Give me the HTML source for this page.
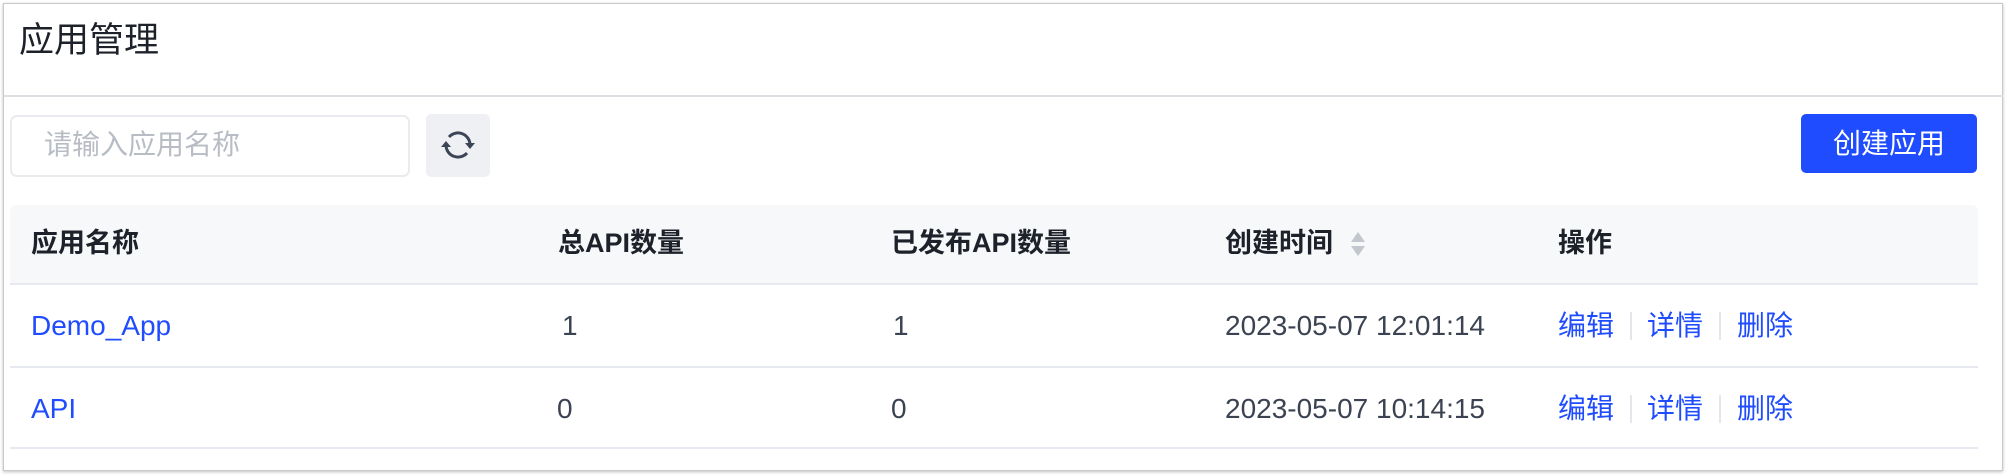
<!DOCTYPE html>
<html><head><meta charset="utf-8"><style>
*{margin:0;padding:0;box-sizing:border-box}
body{width:2008px;height:476px;background:#fff;font-family:"Liberation Sans","Noto Sans CJK SC",sans-serif;position:relative;overflow:hidden}
.frame{position:absolute;left:3px;top:3px;width:2000px;height:468px;border:1px solid #c9c9c9;box-shadow:0 1px 3px rgba(0,0,0,.25)}
.abs{position:absolute;white-space:nowrap}
.title{left:19px;top:18px;font-size:35px;color:#1d2129;line-height:46px}
.hr{left:4px;top:95px;width:1999px;height:2px;background:#dcdfe4}
.input{left:10px;top:115px;width:400px;height:62px;border:2px solid #e9ebef;border-radius:7px}
.ph{left:44px;top:128px;font-size:28px;color:#b8bcc4;line-height:34px}
.refresh{left:426px;top:114px;width:64px;height:63px;background:#eff0f4;border-radius:5px}
.btn{left:1801px;top:114px;width:176px;height:59px;background:#1f4cff;border-radius:5px;color:#fff;font-size:28px;line-height:59px;text-align:center}
.thead{left:10px;top:205px;width:1968px;height:78px;background:#f7f8fa;border-radius:6px 6px 0 0}
.line{left:10px;width:1968px;height:2px;background:#e6e9f0}
.th{font-size:27px;font-weight:bold;color:#1d2129;line-height:34px;top:226px}
.td{font-size:28px;color:#3b4252;line-height:34px}
.a{color:#1f4cff}
.sep{width:2px;height:28px;background:#e5e6eb}
</style></head><body>
<div class="frame"></div>
<div class="abs title">应用管理</div>
<div class="abs hr"></div>
<div class="abs input"></div>
<div class="abs ph">请输入应用名称</div>
<div class="abs refresh"><svg width="64" height="63" viewBox="0 0 64 63"><g fill="none" stroke="#3b4556" stroke-width="3"><path d="M20 31a12 12 0 0 0 21 8"/><path d="M44 31a12 12 0 0 0-21-8"/></g><path d="M15 33h10l-5-6z" fill="#3b4556"/><path d="M39 29h10l-5 6z" fill="#3b4556"/></svg></div>
<div class="abs btn">创建应用</div>
<div class="abs thead"></div>
<div class="abs line" style="top:283px"></div>
<div class="abs line" style="top:366px"></div>
<div class="abs line" style="top:447px"></div>
<div class="abs th" style="left:31px">应用名称</div>
<div class="abs th" style="left:558px">总API数量</div>
<div class="abs th" style="left:891px">已发布API数量</div>
<div class="abs th" style="left:1225px">创建时间</div>
<svg class="abs" style="left:1350px;top:231px" width="16" height="26" viewBox="0 0 16 26"><path d="M8 1l7 10H1z" fill="#c2c6ce"/><path d="M8 25l7-10H1z" fill="#c2c6ce"/></svg>
<div class="abs th" style="left:1558px">操作</div>

<div class="abs td a" style="left:31px;top:309px">Demo_App</div>
<div class="abs td" style="left:562px;top:309px">1</div>
<div class="abs td" style="left:893px;top:309px">1</div>
<div class="abs td" style="left:1225px;top:309px">2023-05-07 12:01:14</div>
<div class="abs td a" style="left:1558px;top:309px">编辑</div>
<div class="abs sep" style="left:1630px;top:312px"></div>
<div class="abs td a" style="left:1647px;top:309px">详情</div>
<div class="abs sep" style="left:1719px;top:312px"></div>
<div class="abs td a" style="left:1737px;top:309px">删除</div>

<div class="abs td a" style="left:31px;top:392px">API</div>
<div class="abs td" style="left:557px;top:392px">0</div>
<div class="abs td" style="left:891px;top:392px">0</div>
<div class="abs td" style="left:1225px;top:392px">2023-05-07 10:14:15</div>
<div class="abs td a" style="left:1558px;top:392px">编辑</div>
<div class="abs sep" style="left:1630px;top:395px"></div>
<div class="abs td a" style="left:1647px;top:392px">详情</div>
<div class="abs sep" style="left:1719px;top:395px"></div>
<div class="abs td a" style="left:1737px;top:392px">删除</div>
</body></html>
